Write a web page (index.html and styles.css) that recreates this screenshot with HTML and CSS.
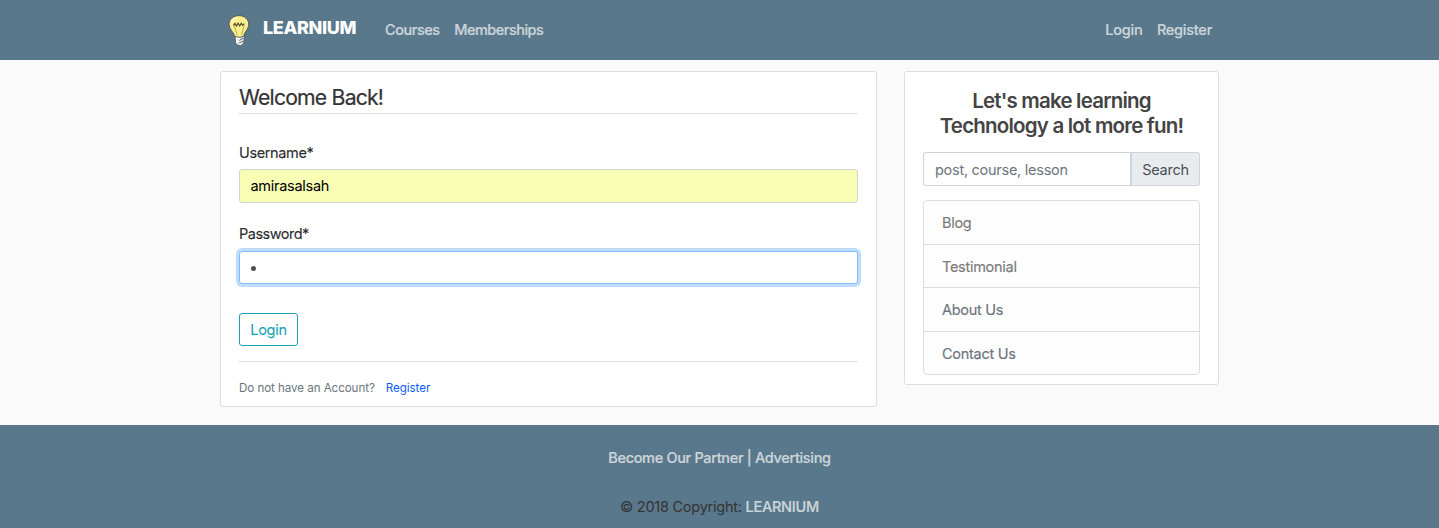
FILE: index.html
```html
<!DOCTYPE html>
<html lang="en">
<head>
<meta charset="utf-8">
<title>Learnium</title>
<link rel="stylesheet" href="styles.css">
</head>
<body>
<header class="navbar">
  <div class="container nav-inner">
    <a class="brand">
      <svg class="bulb" width="22" height="32" viewBox="0 0 22 32">
        <path d="M6.800 20.500 7.800 28.500q1.500 2.500 4.500 2.300 3-.3 3.500-2.800l.8-7.500z" fill="#d9dddd" stroke="#4d5a60" stroke-width=".9"/>
        <path d="M8.800 22v6M11 23l1 6" stroke="#fff" stroke-width="1.700"/>
        <path d="M11 25.500l4.500-2.500M11 28l4.500-2" stroke="#68747a" stroke-width="1"/>
        <path d="M11 .6C5.200.6 1 4.500 1 9.300c0 5.200 4.500 7.200 5.500 11.700 2.500 1.500 6.800 1.500 9.300 0 .7-4.500 4.900-6.700 4.900-11.700C20.700 4.400 16.500.6 11 .6z" fill="#faee8f" stroke="#4c5444" stroke-width=".9"/>
        <path d="M9.200 20 6 10.500M13.500 20l2.700-9.500" fill="none" stroke="#b8a94e" stroke-width="1"/>
        <path d="M5.500 10.500l1.500-2 1.500 2.500 1.500-2.800 1.700 2.600 1.500-2.500 1.500 2 1.500-1.500" fill="none" stroke="#5a542f" stroke-width="1.300"/>
        <path d="M3.800 7.500Q6 3.500 10 2.800" fill="none" stroke="#fff9c4" stroke-width="1.500"/>
      </svg>
      <span class="brand-name">LEARNIUM</span>
    </a>
    <nav class="links"><a class="courses">Courses</a><a>Memberships</a></nav>
    <nav class="links account"><a>Login</a><a>Register</a></nav>
  </div>
</header>
<main class="container content">
  <section class="card login-card">
    <h1 class="legend"><span>Welcome Back!</span></h1>
    <form>
      <label class="label" for="user">Username*</label>
      <input class="field autofill" id="user" value="amirasalsah">
      <label class="label second" for="pass">Password*</label>
      <div class="field focused" id="pass"><i class="mask"></i></div>
      <button class="submit" type="button">Login</button>
    </form>
    <p class="signup"><span>Do not have an Account?</span><a>Register</a></p>
  </section>
  <aside class="card side-card">
    <h2 class="tagline">Let's make learning<br><span>Technology a lot more fun!</span></h2>
    <div class="search">
      <input class="search-input" placeholder="post, course, lesson">
      <button class="search-button" type="button">Search</button>
    </div>
    <ul class="menu">
      <li class="neutral">Blog</li>
      <li class="neutral">Testimonial</li>
      <li>About Us</li>
      <li>Contact Us</li>
    </ul>
  </aside>
</main>
<footer class="footer">
  <p class="partners">Become Our Partner | Advertising</p>
  <p class="copyright">© 2018 Copyright: <a>LEARNIUM</a></p>
</footer>
</body>
</html>
```
FILE: styles.css
```css
* { box-sizing: border-box; }
body {
  margin: 0;
  background: #fafafa;
  color: #333;
  font: 14.5px/22px Inter, sans-serif;
  overflow: hidden;
}
h1, h2, p, ul { margin: 0; padding: 0; }
button, input { font: inherit; letter-spacing: inherit; }
.container { width: 999px; margin-left: 220px; }
.navbar { height: 60px; background: #5a788b; }
.nav-inner { display: flex; height: 60px; padding: 0 7px 0 8px; }
.brand { display: flex; width: 157px; }
.bulb { flex: none; margin-top: 15px; }
.brand-name { margin: 17px 0 0 13px; font-size: 18px; font-weight: 800; color: #fff; letter-spacing: -.35px; }
.links { display: flex; gap: 14.500px; padding-top: 19px; color: #cbd5db; font-weight: 500; letter-spacing: -.5px; -webkit-text-stroke: .2px; }
.courses { letter-spacing: -.45px; }
.account { margin-left: auto; letter-spacing: -.25px; }
.content { display: flex; justify-content: space-between; align-items: flex-start; height: 365px; padding-top: 11px; }
.card { background: #fff; border: 1px solid #dcdddd; border-radius: 3px; }
.login-card { width: 657px; height: 336px; padding: 11px 18px 0; }
.legend { height: 31px; border-bottom: 1px solid #e0e0e0; font-size: 21.200px; line-height: 29px; font-weight: 400; letter-spacing: -.8px; -webkit-text-stroke: .2px; }
.label { display: block; margin-top: 28px; color: #292b2c; letter-spacing: -.37px; -webkit-text-stroke: .1px; }
.label.second { margin-top: 20px; letter-spacing: -.5px; }
.field { display: flex; align-items: center; width: 100%; height: 34px; margin-top: 5px; padding: 0 11px; border: 1px solid #ced4da; border-radius: 3px; outline: 0; }
.autofill { padding: 0 10.500px 2px; background: #f8ffb4; color: #000; letter-spacing: -.27px; }
.focused { height: 33px; margin-top: 6px; background: #fff; border-color: #80bdff; box-shadow: 0 0 0 3px #bfdeff; }
.mask { width: 5px; height: 5px; margin: 2px 0 0; border-radius: 50%; background: #495057; }
.submit { display: block; width: 59px; height: 33px; margin-top: 29px; padding: 0; border: 1px solid #17a2b8; border-radius: 3px; background: #fff; color: #17a2b8; letter-spacing: -.25px; -webkit-text-stroke: .1px; }
.signup { display: flex; gap: 11px; margin-top: 15px; padding-top: 15px; border-top: 1px solid #e0e0e0; font-size: 11.600px; color: #6c757d; letter-spacing: -.06px; }
.signup a { color: #0d5bff; }
.side-card { width: 315px; height: 314px; padding: 16px 18px 0; }
.tagline { font-size: 20.500px; line-height: 25px; font-weight: 600; color: #444; text-align: center; letter-spacing: -.79px; white-space: nowrap; }
.search { display: flex; height: 34px; margin-top: 14px; }
.search-input { width: 207px; padding: 2px 11px 0; border: 1px solid #ced4da; border-right: 0; border-radius: 3px 0 0 3px; background: #fff; color: #495057; letter-spacing: -.27px; }
.search-input::placeholder { color: #6c757d; opacity: 1; }
.search-button { width: 70px; padding: 2px 0 0; border: 1px solid #ced4da; border-left-width: 2px; border-radius: 0 3px 3px 0; background: #e9ecef; color: #495057; letter-spacing: -.25px; }
.menu { display: grid; grid-template-rows: 43px 43px 44px 43px; height: 175px; margin-top: 14px; border: 1px solid #dcdddd; border-radius: 4px; background: #fdfdfd; list-style: none; color: #6c757d; letter-spacing: -.28px; -webkit-text-stroke: .15px; }
.menu li { padding: 11px 18px 0; }
.menu li + li { border-top: 1px solid #dcdddd; }
.menu .neutral { color: #7b7b7b; }
.footer { height: 103px; padding-top: 22px; background: #5a788b; text-align: center; letter-spacing: -.25px; }
.partners, .footer a { color: #cbd5db; font-weight: 500; -webkit-text-stroke: .2px; }
.partners { letter-spacing: -.33px; }
.copyright { margin-top: 27px; }
```
